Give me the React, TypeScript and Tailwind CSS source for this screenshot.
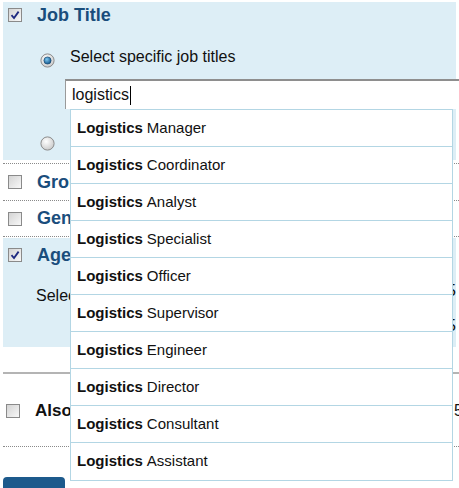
import React from "react";

const suggestions = [
  "Manager",
  "Coordinator",
  "Analyst",
  "Specialist",
  "Officer",
  "Supervisor",
  "Engineer",
  "Director",
  "Consultant",
  "Assistant",
];

function Checkbox({ checked = false }: { checked?: boolean }) {
  return (
    <span className="flex h-[14px] w-[14px] shrink-0 items-center justify-center border border-[#8a8a8a] bg-gradient-to-br from-[#d4d4d4] to-[#f8f8f8]">
      {checked && (
        <svg width="10" height="10" viewBox="0 0 10 10">
          <path d="M1.5 5.2 L4 8 L8.6 1.6" fill="none" stroke="#1f2a80" strokeWidth="1.8" />
        </svg>
      )}
    </span>
  );
}

function Radio({ checked = false }: { checked?: boolean }) {
  return (
    <svg width="15" height="15" viewBox="0 0 15 15" className="shrink-0">
      <defs>
        <radialGradient id="rOff" cx="0.4" cy="0.35" r="0.7">
          <stop offset="0" stopColor="#ffffff" />
          <stop offset="1" stopColor="#c8c8c8" />
        </radialGradient>
        <radialGradient id="rOn" cx="0.4" cy="0.35" r="0.7">
          <stop offset="0" stopColor="#7fc8f0" />
          <stop offset="1" stopColor="#0b4f86" />
        </radialGradient>
      </defs>
      <circle cx="7.5" cy="7.5" r="6.6" fill="url(#rOff)" stroke="#8c8c8c" strokeWidth="1" />
      {checked && <circle cx="7.5" cy="7.5" r="3.6" fill="url(#rOn)" stroke="#0a3a63" strokeWidth="0.6" />}
    </svg>
  );
}

function Heading({ children, checked }: { children: React.ReactNode; checked?: boolean }) {
  return (
    <div className="flex h-[26px] items-center pl-[5px]">
      <Checkbox checked={checked} />
      <span className="ml-[15px] text-[18px] font-bold text-[#1a4d7c]">{children}</span>
    </div>
  );
}

export default function App() {
  return (
    <div
      className="relative h-[488px] w-[459px] overflow-hidden bg-white text-[#111]"
      style={{ fontFamily: '"Liberation Sans", Arial, sans-serif' }}
    >
      <div className="pl-[3px] pt-[2px]">
        {/* Job title section */}
        <div className="w-[453px] bg-[#ddeef6] pb-[5px]">
          <Heading checked>Job Title</Heading>
          <div className="mt-[20px] flex h-[24px] items-center pl-[37px]">
            <Radio checked />
            <span className="-mt-[6px] ml-[15px] text-[16px]">Select specific job titles</span>
          </div>
          <div className="mt-[7px] ml-[62px] flex h-[30px] w-[420px] items-center border-l border-t-2 border-l-[#9a9a9a] border-t-[#8e8e8e] bg-white pl-[6px] text-[16px]">
            logistics
            <span className="ml-[1px] h-[19px] w-px bg-black" />
          </div>
          <div className="mt-[22px] flex h-[24px] items-center pl-[37px]">
            <Radio />
            <span className="ml-[15px] text-[16px]">Select job title groups</span>
          </div>
        </div>

        <div className="mt-[3px] flex h-[37px] w-[470px] items-center border-t border-dotted border-[#8a8a8a]">
          <Heading>Group</Heading>
        </div>
        <div className="flex h-[36px] w-[470px] items-center border-t border-dotted border-[#8a8a8a]">
          <Heading>Gender</Heading>
        </div>
        <div className="w-[470px] border-t border-dotted border-[#8a8a8a] pt-px">
          <div className="h-[109px] w-[453px] bg-[#ddeef6] pt-[4px]">
            <Heading checked>Age</Heading>
            <div className="mt-[16px] flex h-[24px] items-center pl-[33px] text-[16px]">
              <span className="w-[419px]">Select age range:</span>
              <span className="-mt-[10px]">35</span>
            </div>
            <div className="mt-[6px] flex h-[24px] items-center pl-[33px] text-[16px]">
              <span className="w-[419px]" />
              <span>55</span>
            </div>
          </div>
        </div>

        <div className="mt-[25px] w-[470px] border-t-2 border-[#b4b4b4]">
          <div className="flex h-[72px] items-center pl-[3px] pt-[2px]">
            <Checkbox />
            <span className="ml-[15px] w-[419px] text-[17px] font-bold">Also include similar titles</span>
            <span className="text-[16px]">5</span>
          </div>
        </div>
        <div className="w-[470px] border-t border-dotted border-[#8a8a8a]">
          <div className="mt-[30px] h-[12px] w-[62px] rounded-t-[4px] bg-[#1d5a8c]" />
        </div>
      </div>

      {/* Suggestions dropdown */}
      <ul className="absolute left-[70px] top-[109px] w-[383px] border border-t border-[#b3d6e4] bg-white">
        {suggestions.map((s, i) => (
          <li
            key={s}
            className={`flex h-[37px] items-center pl-[6px] text-[15px] ${
              i < suggestions.length - 1 ? "border-b border-[#b3d6e4]" : ""
            }`}
          >
            <span className="font-bold">Logistics</span>
            <span className="ml-[4px]">{s}</span>
          </li>
        ))}
      </ul>
    </div>
  );
}
